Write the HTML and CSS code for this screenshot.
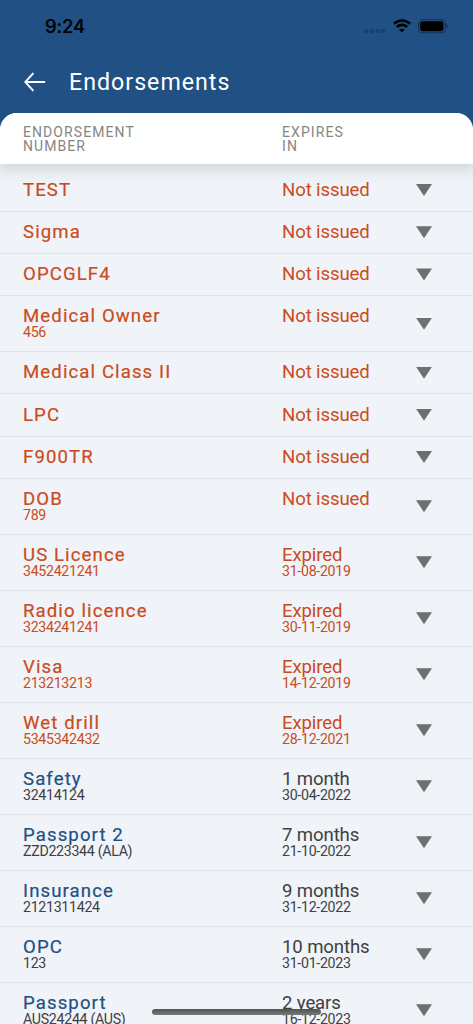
FILE: index.html
```html
<!DOCTYPE html>
<html lang="en">
<head>
<meta charset="utf-8">
<title>Endorsements</title>
<link rel="stylesheet" href="styles.css">
</head>
<body>
<div class="screen">
  <div class="status">
    <span class="time">9:24</span>
    <div class="indicators">
      <svg class="signal" width="22" height="4" viewBox="0 0 22 4"><rect x="0" width="4" height="4" rx="1"/><rect x="5.8" width="4" height="4" rx="1"/><rect x="11.6" width="4" height="4" rx="1"/><rect x="17.4" width="4" height="4" rx="1"/></svg>
      <svg class="wifi" width="18" height="14" viewBox="0 0 18 14"><path d="M.9 4.7Q9-2 17.1 4.7M3.8 7.9Q9 3.7 14.2 7.9" fill="none" stroke="#000" stroke-width="2.6"/><path d="M6.2 10.7Q9 8.6 11.8 10.7L9 13.6Z"/></svg>
      <svg class="battery" width="31" height="15" viewBox="0 0 31 15"><rect x=".6" y=".7" width="26.6" height="13" rx="3.8" fill="none" stroke="#143254" stroke-width="1.1"/><rect x="2.2" y="2.2" width="23.2" height="10" rx="2.4"/><path d="M28.6 5v4.4q1.4-.7 1.4-2.2t-1.4-2.2z" fill="#143254"/></svg>
    </div>
  </div>
  <header class="bar">
    <svg class="back" width="22" height="20" viewBox="0 0 22 20"><path d="M9.4 1.2 1.2 10l8.2 8.8M1.2 10H21.2" fill="none" stroke="#fff" stroke-width="1.9"/></svg>
    <h1>Endorsements</h1>
  </header>
  <main class="sheet">
    <div class="head"><span>ENDORSEMENT<br>NUMBER</span><span>EXPIRES<br>IN</span></div>
    <div class="list">
      <div class="row bad"><div class="name"><b>TEST</b></div><div class="when"><b>Not issued</b></div><i class="caret"></i></div>
      <div class="row bad"><div class="name"><b>Sigma</b></div><div class="when"><b>Not issued</b></div><i class="caret"></i></div>
      <div class="row bad"><div class="name"><b>OPCGLF4</b></div><div class="when"><b>Not issued</b></div><i class="caret"></i></div>
      <div class="row tall bad"><div class="name"><b>Medical Owner</b><small>456</small></div><div class="when"><b>Not issued</b></div><i class="caret"></i></div>
      <div class="row bad"><div class="name"><b>Medical Class II</b></div><div class="when"><b>Not issued</b></div><i class="caret"></i></div>
      <div class="row bad"><div class="name"><b>LPC</b></div><div class="when"><b>Not issued</b></div><i class="caret"></i></div>
      <div class="row bad"><div class="name"><b>F900TR</b></div><div class="when"><b>Not issued</b></div><i class="caret"></i></div>
      <div class="row tall bad"><div class="name"><b>DOB</b><small>789</small></div><div class="when"><b>Not issued</b></div><i class="caret"></i></div>
      <div class="row tall bad"><div class="name"><b>US Licence</b><small>3452421241</small></div><div class="when"><b>Expired</b><small>31-08-2019</small></div><i class="caret"></i></div>
      <div class="row tall bad"><div class="name"><b>Radio licence</b><small>3234241241</small></div><div class="when"><b>Expired</b><small>30-11-2019</small></div><i class="caret"></i></div>
      <div class="row tall bad"><div class="name"><b>Visa</b><small>213213213</small></div><div class="when"><b>Expired</b><small>14-12-2019</small></div><i class="caret"></i></div>
      <div class="row tall bad"><div class="name"><b>Wet drill</b><small>5345342432</small></div><div class="when"><b>Expired</b><small>28-12-2021</small></div><i class="caret"></i></div>
      <div class="row tall"><div class="name"><b>Safety</b><small>32414124</small></div><div class="when"><b>1 month</b><small>30-04-2022</small></div><i class="caret"></i></div>
      <div class="row tall"><div class="name"><b>Passport 2</b><small>ZZD223344 (ALA)</small></div><div class="when"><b>7 months</b><small>21-10-2022</small></div><i class="caret"></i></div>
      <div class="row tall"><div class="name"><b>Insurance</b><small>2121311424</small></div><div class="when"><b>9 months</b><small>31-12-2022</small></div><i class="caret"></i></div>
      <div class="row tall"><div class="name"><b>OPC</b><small>123</small></div><div class="when"><b>10 months</b><small>31-01-2023</small></div><i class="caret"></i></div>
      <div class="row tall"><div class="name"><b>Passport</b><small>AUS24244 (AUS)</small></div><div class="when"><b>2 years</b><small>16-12-2023</small></div><i class="caret"></i></div>
    </div>
  </main>
  <div class="home"></div>
</div>
</body>
</html>
```
FILE: styles.css
```css
* { box-sizing: border-box; }
body { margin: 0; font-family: Roboto, sans-serif; background: #215085; }
.screen { position: relative; width: 473px; height: 1024px; overflow: hidden; display: flex; flex-direction: column; background: #215085; }
.status { height: 52px; flex: none; display: flex; justify-content: space-between; padding: 0 24px 0 45px; }
.time { font: 500 18.5px/52px Inter, sans-serif; letter-spacing: -.1px; color: #000; -webkit-text-stroke: .2px #000; }
.indicators { display: flex; align-items: flex-start; padding-top: 19px; }
.signal { margin: 10px 7px 0 0; fill: #1a4069; }
.wifi { margin-right: 7px; }
.bar { height: 61px; flex: none; display: flex; align-items: flex-start; padding: 20px 0 0 23.5px; }
.bar h1 { margin: -2px 0 0 23.5px; font-size: 23.2px; font-weight: 400; line-height: 25px; letter-spacing: 1px; color: #fff; }
.sheet { flex: 1; min-height: 0; display: flex; flex-direction: column; border-radius: 17px 17px 0 0; background: #f0f4f8; overflow: hidden; }
.head { position: relative; flex: none; height: 51px; padding: 11.6px 0 0 23px; display: grid; grid-template-columns: 259px 1fr; background: #fff; box-shadow: 0 2px 14px 3px rgba(60, 75, 85, .2); font-size: 14px; line-height: 14px; letter-spacing: 1.08px; color: #858585; }
.list { padding-top: 5.6px; }
.row { height: 42.2px; display: grid; grid-template-columns: 259px 134px 16px; padding: 9.3px 0 0 23px; border-bottom: 1px solid #e1e5e9; color: #3e4043; }
.tall { height: 56px; }
.row b { display: block; font-weight: 400; font-size: 18.6px; line-height: 22px; letter-spacing: -.12px; }
.row small { display: block; margin-top: -1px; font-size: 14.2px; line-height: 13px; letter-spacing: -.3px; }
.row .name b { -webkit-text-stroke: .2px; letter-spacing: 1.1px; color: #215085; }
.bad, .row.bad .name b { color: #cb4b20; }
.caret { width: 16px; height: 12px; margin-top: 5.2px; background: #6d6f71; clip-path: polygon(0 0, 100% 0, 50% 100%); }
.tall .caret { margin-top: 12.2px; }
.home { position: absolute; left: 152px; top: 1008.5px; width: 169px; height: 6px; border-radius: 3px; background: linear-gradient(#505254, #77797b); }
```
